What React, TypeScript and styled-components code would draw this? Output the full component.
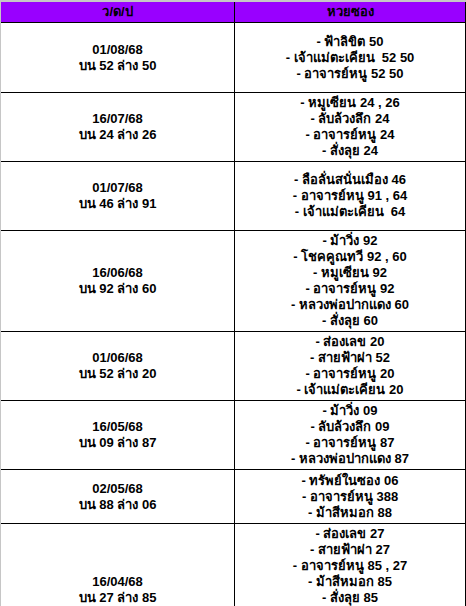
import React from "react";
import styled, { createGlobalStyle } from "styled-components";

const GlobalStyle = createGlobalStyle`
  html, body {
    margin: 0;
    padding: 0;
    background: #ffffff;
  }
  body {
    font-family: "Liberation Sans", "DejaVu Sans", "Noto Sans", sans-serif;
  }
`;

const Sheet = styled.div`
  width: 466px;
  box-sizing: border-box;
  border-top: 2px solid #c6c6c6;
  border-left: 1px solid #c6c6c6;
`;

const GridRow = styled.div<{ $h: number; $head?: boolean }>`
  display: grid;
  grid-template-columns: 233px 231px;
  height: ${(p) => p.$h}px;
  box-sizing: border-box;
  border-bottom: 1px solid #000000;
  border-right: 1px solid #000000;
  background: ${(p) => (p.$head ? "#9900ff" : "#ffffff")};
`;

const Cell = styled.div<{ $divider?: boolean }>`
  display: flex;
  flex-direction: column;
  align-items: center;
  justify-content: center;
  text-align: center;
  box-sizing: border-box;
  border-left: ${(p) => (p.$divider ? "1px solid #000000" : "none")};
  font-weight: bold;
  font-size: 13px;
  line-height: 16px;
  color: #000000;
  white-space: pre;
  overflow: hidden;
`;

const HeadText = styled.span`
  font-size: 13px;
  line-height: 16px;
  color: #000000;
`;

const Line = styled.span`
  display: block;
`;

type Entry = { date: string; result: string; tips: string[]; h: number };

const rows: Entry[] = [
  {
    date: "01/08/68",
    result: "บน 52 ล่าง 50",
    tips: ["- ฟ้าลิขิต 50", "- เจ้าแม่ตะเคียน  52 50", "- อาจารย์หนู 52 50"],
    h: 70,
  },
  {
    date: "16/07/68",
    result: "บน 24 ล่าง 26",
    tips: ["- หมูเซียน 24 , 26", "- ลับล้วงลึก 24", "- อาจารย์หนู 24", "- สั่งลุย 24"],
    h: 69,
  },
  {
    date: "01/07/68",
    result: "บน 46 ล่าง 91",
    tips: ["- ลือลั่นสนั่นเมือง 46", "- อาจารย์หนู 91 , 64", "- เจ้าแม่ตะเคียน  64"],
    h: 69,
  },
  {
    date: "16/06/68",
    result: "บน 92 ล่าง 60",
    tips: [
      "- ม้าวิ่ง 92",
      "- โชคคูณทวี 92 , 60",
      "- หมูเซียน 92",
      "- อาจารย์หนู 92",
      "- หลวงพ่อปากแดง 60",
      "- สั่งลุย 60",
    ],
    h: 101,
  },
  {
    date: "01/06/68",
    result: "บน 52 ล่าง 20",
    tips: ["- ส่องเลข 20", "- สายฟ้าผ่า 52", "- อาจารย์หนู 20", "- เจ้าแม่ตะเคียน 20"],
    h: 69,
  },
  {
    date: "16/05/68",
    result: "บน 09 ล่าง 87",
    tips: ["- ม้าวิ่ง 09", "- ลับล้วงลึก 09", "- อาจารย์หนู 87", "- หลวงพ่อปากแดง 87"],
    h: 69,
  },
  {
    date: "02/05/68",
    result: "บน 88 ล่าง 06",
    tips: ["- ทรัพย์ในซอง 06", "- อาจารย์หนู 388", "- ม้าสีหมอก 88"],
    h: 54,
  },
  {
    date: "16/04/68",
    result: "บน 27 ล่าง 85",
    tips: [
      "- ส่องเลข 27",
      "- สายฟ้าผ่า 27",
      "- อาจารย์หนู 85 , 27",
      "- ม้าสีหมอก 85",
      "- สั่งลุย 85",
      "- หลวงพ่อปากแดง 85",
      "- ทรัพย์ในซอง 27",
      "- เจ้าแม่ตะเคียน 85",
    ],
    h: 132,
  },
];

export default function App() {
  return (
    <>
      <GlobalStyle />
      <Sheet>
        <GridRow $h={21} $head>
          <Cell>
            <HeadText>ว/ด/ป</HeadText>
          </Cell>
          <Cell $divider>
            <HeadText>หวยซอง</HeadText>
          </Cell>
        </GridRow>
        {rows.map((r) => (
          <GridRow key={r.date} $h={r.h}>
            <Cell>
              <Line>{r.date}</Line>
              <Line>{r.result}</Line>
            </Cell>
            <Cell $divider>
              {r.tips.map((t, i) => (
                <Line key={i}>{t}</Line>
              ))}
            </Cell>
          </GridRow>
        ))}
      </Sheet>
    </>
  );
}
